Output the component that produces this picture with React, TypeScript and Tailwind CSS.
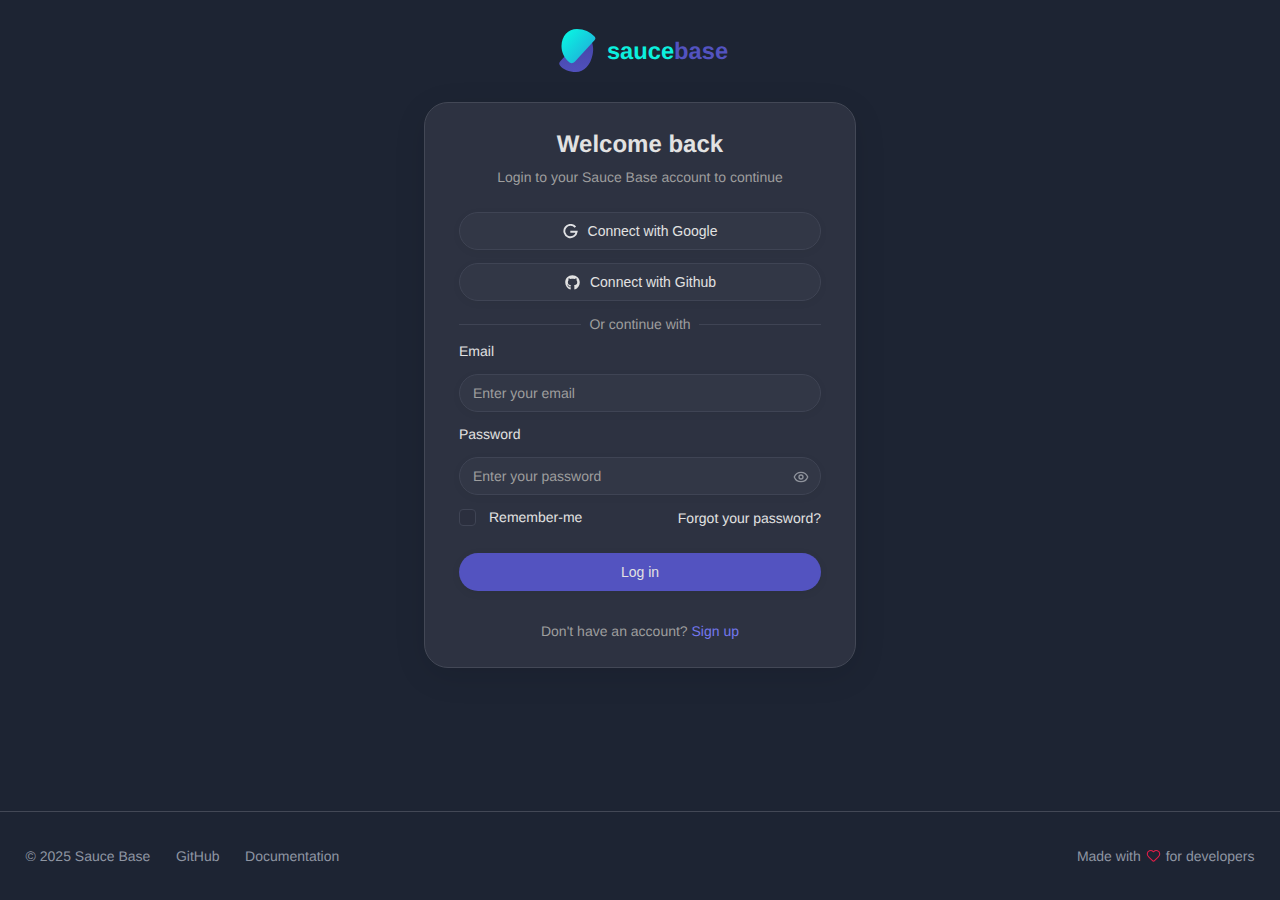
import { Eye, Heart } from 'lucide-react'
import { FaGithub } from 'react-icons/fa'

function Logo() {
  return (
    <svg width="42" height="48" viewBox="0 0 42 48" fill="none">
      <defs>
        <linearGradient id="teal" x1="8" y1="8" x2="30" y2="28" gradientUnits="userSpaceOnUse">
          <stop offset="0" stopColor="#0af2e2" />
          <stop offset="1" stopColor="#1cb8da" />
        </linearGradient>
        <linearGradient id="indigo" x1="20" y1="16" x2="20" y2="46" gradientUnits="userSpaceOnUse">
          <stop offset="0" stopColor="#4646a8" />
          <stop offset="1" stopColor="#5050bc" />
        </linearGradient>
      </defs>
      <path
        d="M33 12C36 17 37 23 35.5 29C33.5 39 27 46 19 46C12 46 6 43.5 3 39.5C1.8 37.8 2 36.6 3.5 35L9 29Z"
        fill="url(#indigo)"
      />
      <path
        d="M4.5 20C4.5 10 11 3 20 3C27 3 33.5 6 37.5 10.5C38.7 12 38.7 13 37.5 14.3L18 35.5C15.5 38 13.5 37.5 11.5 35.5C7 31.5 4.5 26 4.5 20Z"
        fill="url(#teal)"
      />
    </svg>
  )
}

function GoogleIcon() {
  return (
    <svg width="15" height="15" viewBox="0 0 16 16" fill="none" stroke="#e0e1e4" strokeWidth="2">
      <path d="M13.2 3.4A6.6 6.6 0 1 0 14.6 8.2H7.8" />
    </svg>
  )
}

function SocialButton({ icon, label }: { icon: React.ReactNode; label: string }) {
  return (
    <button className="h-[38px] w-full rounded-[19px] border border-[#3f4454] bg-[#323746] flex items-center justify-center gap-[10px] text-[14px] text-[#e2e2e2] shadow-[0_2px_10px_rgba(0,0,0,0.04)]">
      {icon}
      {label}
    </button>
  )
}

export default function App() {
  return (
    <div className="min-h-screen flex flex-col bg-[#1d2433] font-['Liberation_Sans',Arial,sans-serif] antialiased [text-rendering:geometricPrecision] opacity-[0.999]">
      <main className="flex-1 flex flex-col items-center pt-[26px]">
        <div className="flex items-center gap-[8px] h-[48px] ml-[5px]">
          <Logo />
          <div className="text-[23.7px] font-bold leading-none mt-[6px]">
            <span className="text-[#0cf0de]">sauce</span>
            <span className="text-[#5353c0]">base</span>
          </div>
        </div>

        <div className="mt-[28px] w-[432px] h-[566px] rounded-[24px] border border-[#434856] bg-[#2d3241] px-[34px] pt-[26px] shadow-[0_8px_32px_rgba(0,0,0,0.1)]">
          <h1 className="text-[24px] leading-[32px] font-bold text-[#e2e2e2] text-center">Welcome back</h1>
          <p className="mt-[6px] text-[14px] leading-[20px] text-[#9e9e9e] text-center">
            Login to your Sauce Base account to continue
          </p>

          <div className="mt-[25px] flex flex-col gap-[13px]">
            <SocialButton icon={<GoogleIcon />} label="Connect with Google" />
            <SocialButton icon={<FaGithub size={15} color="#e2e2e2" className="ml-[1px]" />} label="Connect with Github" />
          </div>

          <div className="mt-[13px] flex items-center gap-[8.5px] h-[20px]">
            <div className="flex-1 h-px bg-[#3f4454]" />
            <span className="text-[14px] text-[#9e9e9e]">Or continue with</span>
            <div className="flex-1 h-px bg-[#3f4454]" />
          </div>

          <label className="block mt-[7px] text-[14px] leading-[20px] text-[#e2e2e2]">Email</label>
          <div className="mt-[13px] h-[38px] rounded-[19px] border border-[#3f4454] bg-[#323746] px-[13px] flex items-center text-[14px] text-[#9e9e9e] shadow-[0_2px_10px_rgba(0,0,0,0.04)]">
            Enter your email
          </div>

          <label className="block mt-[12px] text-[14px] leading-[20px] text-[#e2e2e2]">Password</label>
          <div className="mt-[13px] h-[38px] rounded-[19px] border border-[#3f4454] bg-[#323746] pl-[13px] pr-[11px] flex items-center justify-between text-[14px] text-[#9e9e9e] shadow-[0_2px_10px_rgba(0,0,0,0.04)]">
            Enter your password
            <Eye size={16} color="#8f939c" className="mt-[1px]" />
          </div>

          <div className="mt-[13px] flex items-center justify-between h-[20px]">
            <div className="flex items-center gap-[13px]">
              <div className="w-[17px] h-[17px] rounded-[4px] border border-[#3f4454] bg-[#2b2f3e] mt-[-2px]" />
              <span className="text-[14px] text-[#e2e2e2] mt-[-2px]">Remember-me</span>
            </div>
            <a className="text-[14px] text-[#e2e2e2]">Forgot your password?</a>
          </div>

          <button className="mt-[25px] w-full h-[38px] rounded-[19px] bg-[#5353c0] text-[14px] text-[#e2e2e2] shadow-[0_2px_10px_rgba(0,0,0,0.06)]">Log in</button>

          <p className="mt-[30px] text-center text-[14px] leading-[20px] text-[#9e9e9e]">
            Don't have an account? <a className="text-[#7478ee]">Sign up</a>
          </p>
        </div>
      </main>

      <footer className="h-[89px] border-t border-[#434856] px-[25.6px] flex items-center justify-between text-[14px] text-[#8f96a3]">
        <div className="flex items-center gap-[25.6px]">
          <span>© 2025 Sauce Base</span>
          <a>GitHub</a>
          <a>Documentation</a>
        </div>
        <div className="flex items-center gap-[5px]">
          Made with <Heart size={15} color="#e11d48" strokeWidth={1.75} className="mt-[-1px]" /> for developers
        </div>
      </footer>
    </div>
  )
}
